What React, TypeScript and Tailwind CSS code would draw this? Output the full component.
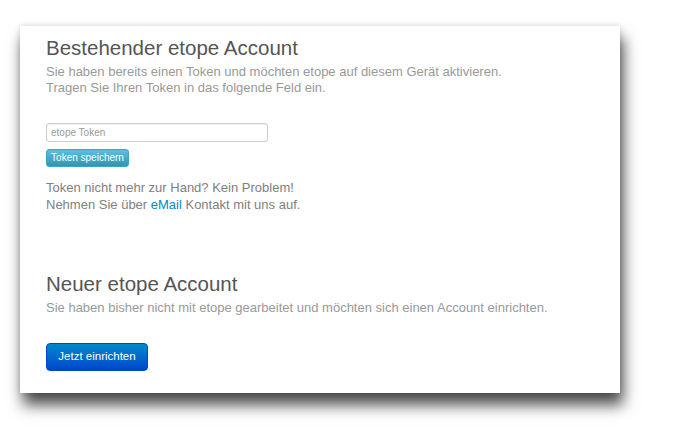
export default function App() {
  return (
    <div className="w-[692px] h-[431px] bg-white pt-[26px] pl-[20px] font-['Liberation_Sans',Arial,sans-serif]">
      <div className="w-[600px] h-[367px] bg-white shadow-[3px_12px_14px_rgba(0,0,0,0.7),0_0_6px_rgba(0,0,0,0.15)] pt-[10px] px-[26px] flex flex-col">
        <h1 className="text-[20.5px] leading-[24px] text-[#555]">Bestehender etope Account</h1>
        <p className="mt-[4px] text-[13px] leading-[16px] text-[#999]">
          Sie haben bereits einen Token und möchten etope auf diesem Gerät aktivieren.
          <br />
          Tragen Sie Ihren Token in das folgende Feld ein.
        </p>
        <input
          type="text"
          placeholder="etope Token"
          className="mt-[27px] w-[222px] h-[19px] border border-[#ccc] rounded-[3px] px-[4px] text-[10px] text-[#555] placeholder:text-[#999] shadow-[inset_0_1px_1px_rgba(0,0,0,0.06)] outline-none"
        />
        <button className="mt-[7px] w-[83px] h-[18px] rounded-[3px] bg-gradient-to-b from-[#5bc0de] to-[#2f96b4] border border-[#3aa4c4] text-white text-[10px] leading-none">
          Token speichern
        </button>
        <p className="mt-[12px] text-[13px] leading-[17px] text-[#808080]">
          Token nicht mehr zur Hand? Kein Problem!
          <br />
          Nehmen Sie über <a href="#" className="text-[#0088cc]">eMail</a> Kontakt mit uns auf.
        </p>
        <h2 className="mt-[59px] text-[20.5px] leading-[24px] text-[#555]">Neuer etope Account</h2>
        <p className="mt-[4px] text-[13px] leading-[16px] text-[#999]">
          Sie haben bisher nicht mit etope gearbeitet und möchten sich einen Account einrichten.
        </p>
        <button className="mt-[27px] w-[102px] h-[28px] rounded-[4px] bg-gradient-to-b from-[#0088cc] to-[#0044cc] border border-[#0044cc] text-white text-[11.5px] leading-none">
          Jetzt einrichten
        </button>
      </div>
    </div>
  );
}
